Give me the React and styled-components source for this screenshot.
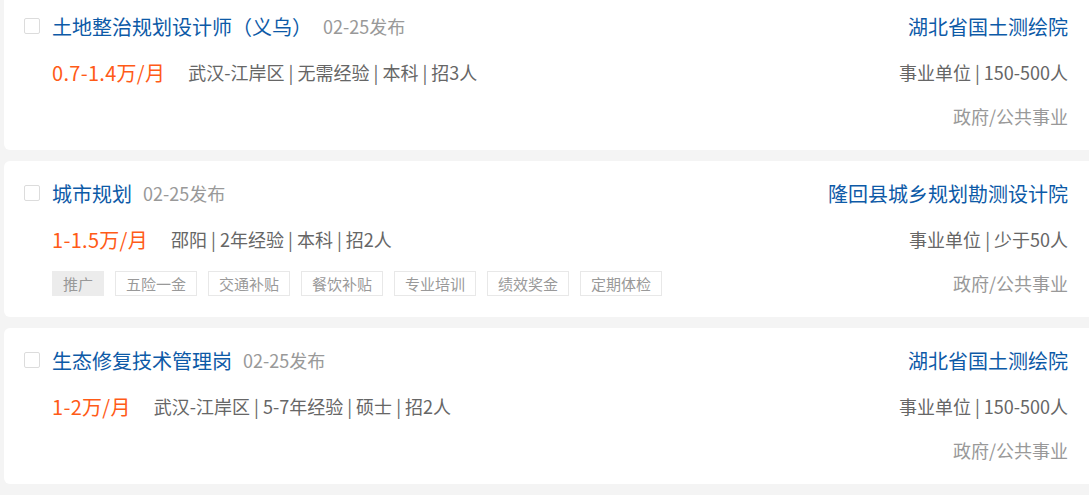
import styled, { createGlobalStyle } from "styled-components";

const GlobalStyle = createGlobalStyle`
    body {
        margin: 0;
        background: #f4f4f4;
        overflow: hidden;
        font-family: "Noto Sans CJK SC", "Liberation Sans", sans-serif;
    }
`

const List = styled.div`
    display: flex;
    flex-direction: column;
    gap: 11px;
    width: 1096px;
    margin: -6px 0 0 4px;
`

const Card = styled.div`
    height: 156px;
    box-sizing: border-box;
    padding: 18px 32px 20px 20px;
    background: #fff;
    border-radius: 6px;
    display: flex;
    flex-direction: column;
    gap: 18px;
    & > div:last-child {
        margin-top: -2px;
    }
`

const Row = styled.div`
    display: flex;
    align-items: center;
    justify-content: space-between;
    height: 28px;
`

const Left = styled.div`
    display: flex;
    align-items: center;
    padding-left: ${p => p.$indent ? "28px" : "0"};
`

const Check = styled.span`
    width: 14px;
    height: 14px;
    border: 1px solid #dcdcdc;
    border-radius: 2px;
    margin-right: 12px;
`

const Title = styled.a`
    font-size: 20px;
    color: #0d5aa7;
    text-decoration: none;
`

const Date = styled.span`
    font-size: 18px;
    color: #999;
    margin-left: 11px;
`

const Salary = styled.span`
    font-size: 20px;
    letter-spacing: 0.3px;
    color: #ff5b17;
    margin-right: 23px;
`

const Meta = styled.span`
    font-size: 18px;
    color: #666;
`

const Company = styled.a`
    font-size: 20px;
    color: #0d5aa7;
    text-decoration: none;
`

const Scale = styled.span`
    font-size: 18px;
    color: #666;
`

const Industry = styled.span`
    font-size: 18px;
    color: #999;
`

const Tags = styled.div`
    display: flex;
    gap: 11px;
`

const Tag = styled.span`
    height: 25px;
    box-sizing: border-box;
    padding: 0 10px;
    display: flex;
    align-items: center;
    font-size: 15px;
    color: #999;
    border: 1px solid ${p => p.$promo ? "#ececec" : "#e8e8e8"};
    background: ${p => p.$promo ? "#ececec" : "#fff"};
`

const jobs = [
    {
        title: "土地整治规划设计师（义乌）",
        salary: "0.7-1.4万/月",
        meta: "武汉-江岸区 | 无需经验 | 本科 | 招3人",
        company: "湖北省国土测绘院",
        scale: "事业单位 | 150-500人",
        tags: [],
    },
    {
        title: "城市规划",
        salary: "1-1.5万/月",
        meta: "邵阳 | 2年经验 | 本科 | 招2人",
        company: "隆回县城乡规划勘测设计院",
        scale: "事业单位 | 少于50人",
        promo: true,
        tags: ["五险一金", "交通补贴", "餐饮补贴", "专业培训", "绩效奖金", "定期体检"],
    },
    {
        title: "生态修复技术管理岗",
        salary: "1-2万/月",
        meta: "武汉-江岸区 | 5-7年经验 | 硕士 | 招2人",
        company: "湖北省国土测绘院",
        scale: "事业单位 | 150-500人",
        tags: [],
    },
]

function App() {
    return (
        <>
            <GlobalStyle />
            <List>
                {jobs.map((job, i) => (
                    <Card key={i}>
                        <Row>
                            <Left>
                                <Check />
                                <Title href="#">{job.title}</Title>
                                <Date>02-25发布</Date>
                            </Left>
                            <Company href="#">{job.company}</Company>
                        </Row>
                        <Row>
                            <Left $indent>
                                <Salary>{job.salary}</Salary>
                                <Meta>{job.meta}</Meta>
                            </Left>
                            <Scale>{job.scale}</Scale>
                        </Row>
                        <Row>
                            <Left $indent>
                                <Tags>
                                    {job.promo && <Tag $promo>推广</Tag>}
                                    {job.tags.map(t => <Tag key={t}>{t}</Tag>)}
                                </Tags>
                            </Left>
                            <Industry>政府/公共事业</Industry>
                        </Row>
                    </Card>
                ))}
            </List>
        </>
    )
}

export default App;
